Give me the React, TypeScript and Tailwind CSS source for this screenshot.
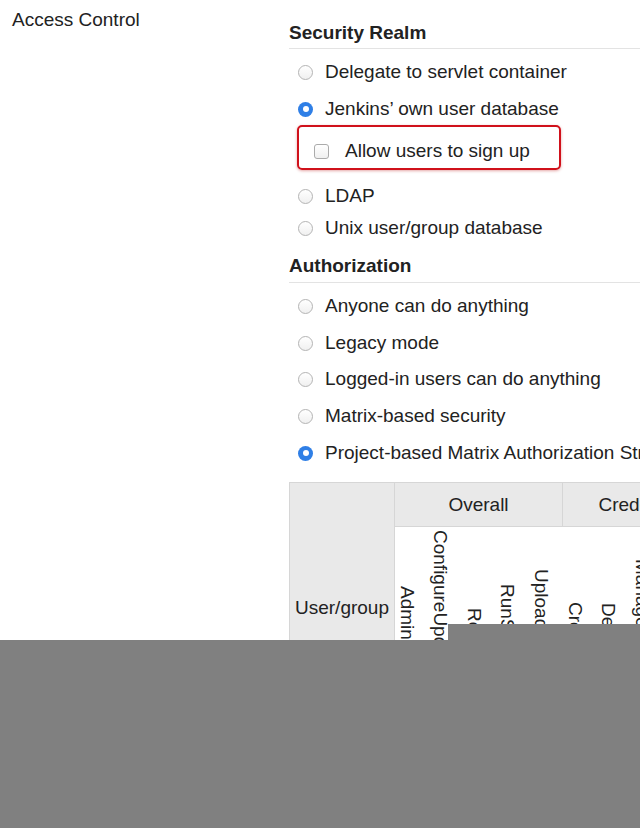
import React from "react";

const Radio = ({ checked }: { checked?: boolean }) =>
  checked ? (
    <span className="w-[15px] h-[15px] rounded-full bg-[#2f7fe6] flex items-center justify-center shrink-0">
      <span className="w-[6px] h-[6px] rounded-full bg-white" />
    </span>
  ) : (
    <span className="w-[15px] h-[15px] rounded-full border border-[#b4b4b4] bg-gradient-to-b from-white to-[#f0f0f0] shrink-0" />
  );

const Row = ({ label, checked, mt }: { label: string; checked?: boolean; mt: string }) => (
  <div className={`flex items-center h-[24px] pl-[9px] gap-[12px] ${mt}`}>
    <Radio checked={checked} />
    <span>{label}</span>
  </div>
);

const Col = ({ label }: { label: string }) => (
  <div className="w-[33.4px] shrink-0 flex items-center justify-start">
    <span className="[writing-mode:vertical-rl] leading-[24px] w-[24px] whitespace-nowrap">{label}</span>
  </div>
);

export default function App() {
  return (
    <div className="relative w-[640px] h-[828px] overflow-hidden bg-white text-[#222] font-['Liberation_Sans',Arial,sans-serif] text-[19px] leading-[24px]">
      <div className="h-[640px] overflow-hidden flex">
        <div className="w-[289px] shrink-0 pl-[12px] pt-[8px]">Access Control</div>
        <div className="flex-1 min-w-0 pt-[21px] whitespace-nowrap">
          <div className="font-bold pb-[3px] border-b border-[#e3e3e3]">Security Realm</div>
          <Row label="Delegate to servlet container" mt="mt-[11px]" />
          <Row label="Jenkins’ own user database" checked mt="mt-[13px]" />
          <div className="mt-[4px] ml-[8px] w-[264px] h-[45px] border-2 border-[#d0111b] rounded-[5px] shadow-[0_1px_3px_rgba(180,0,0,0.35)] pl-[15px] pt-[12px]">
            <div className="flex items-center h-[24px] gap-[16px]">
              <span className="w-[15px] h-[15px] rounded-[3px] border border-[#ababab] bg-gradient-to-b from-white to-[#f0f0f0] shrink-0" />
              <span>Allow users to sign up</span>
            </div>
          </div>
          <Row label="LDAP" mt="mt-[14px]" />
          <Row label="Unix user/group database" mt="mt-[8px]" />
          <div className="mt-[14px] font-bold pb-[4px] border-b border-[#e3e3e3]">Authorization</div>
          <Row label="Anyone can do anything" mt="mt-[11px]" />
          <Row label="Legacy mode" mt="mt-[13px]" />
          <Row label="Logged-in users can do anything" mt="mt-[12px]" />
          <Row label="Matrix-based security" mt="mt-[13px]" />
          <Row label="Project-based Matrix Authorization Strategy" checked mt="mt-[13px]" />
          <div className="mt-[17px] flex w-max border-l border-t border-[#d6d6d6]">
            <div className="w-[105px] h-[251px] bg-[#e9e9e9] border-r border-b border-[#d6d6d6] flex items-center justify-center">
              User/group
            </div>
            <div className="flex flex-col w-[168px]">
              <div className="h-[44px] bg-[#e9e9e9] border-r border-b border-[#d6d6d6] flex items-center justify-center">
                Overall
              </div>
              <div className="h-[207px] flex">
                <Col label="Administer" />
                <Col label="ConfigureUpdateCenter" />
                <Col label="Read" />
                <Col label="RunScripts" />
                <Col label="UploadPlugins" />
              </div>
            </div>
            <div className="flex flex-col w-[168px]">
              <div className="h-[44px] bg-[#e9e9e9] border-r border-b border-[#d6d6d6] flex items-center justify-center">
                Credentials
              </div>
              <div className="h-[207px] flex">
                <Col label="Create" />
                <Col label="Delete" />
                <Col label="ManageDomains" />
                <Col label="Update" />
                <Col label="View" />
              </div>
            </div>
          </div>
        </div>
      </div>
      <div className="h-[188px] bg-[#808080]" />
      <div className="absolute left-[448px] top-[624px] w-[192px] h-[16px] bg-[#808080]" />
    </div>
  );
}
